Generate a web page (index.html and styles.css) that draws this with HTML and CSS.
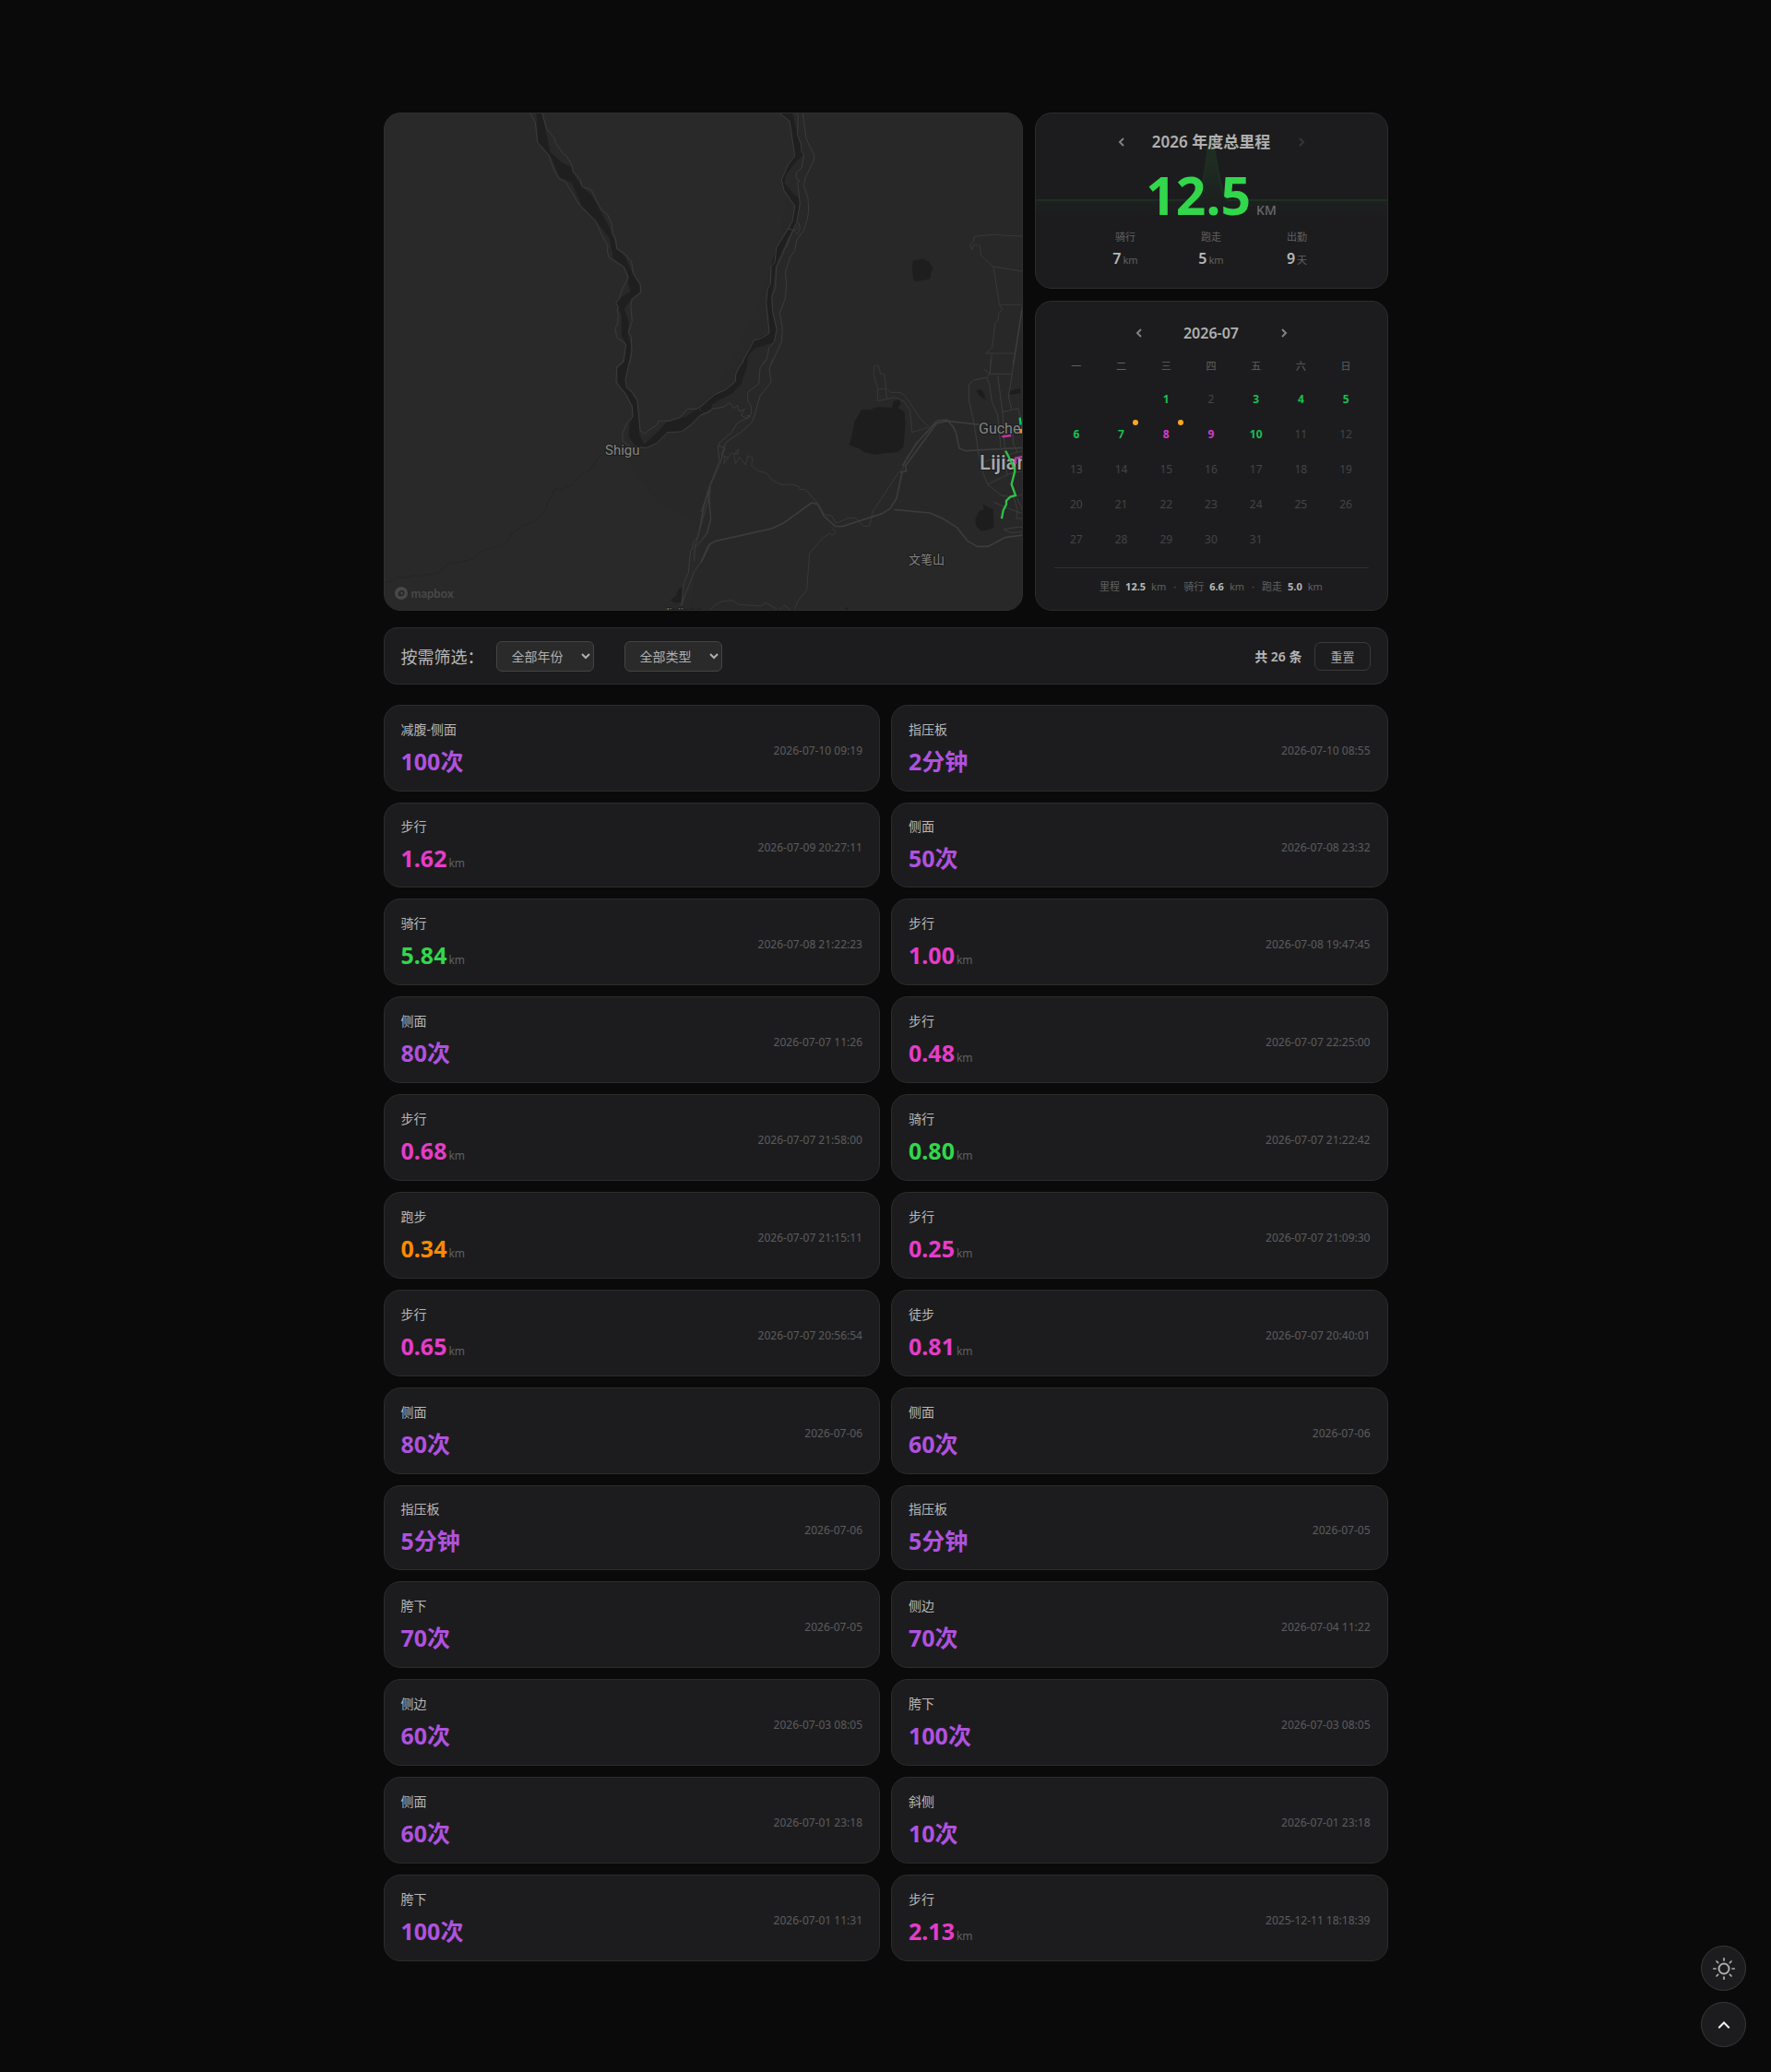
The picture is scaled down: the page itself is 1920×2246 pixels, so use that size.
FILE: index.html
```html
<!DOCTYPE html>
<html lang="zh-CN">
<head>
    <meta charset="UTF-8">
    <meta name="viewport" content="width=device-width, initial-scale=1.0">
    <title>运动记录</title>
    <link rel="stylesheet" href="styles.css">
</head>
<body>
    <main class="page">
        <section class="overview">
            <div class="map">
                <svg class="map-canvas" viewBox="0 0 691 538" preserveAspectRatio="xMinYMin slice" role="img" aria-label="运动轨迹地图">
                    <rect width="691" height="538" fill="#292929"/>
                    <path d="M450 0H691V538H330L345 470L335 440L300 425L268 385L262 365L310 335L360 300L400 220L430 130Z" fill="#282828"/>

                    <!-- west river -->
                    <g transform="translate(-7 -8) scale(.3333)">
                        <path d="M515 24L532 24L545 80L560 150L600 185L630 200L634 218L662 262L695 290L725 345L745 380L765 430L775 465L803 490L830 550L852 585L850 605L822 628L800 660L815 700L812 740L822 780L815 840L798 840L806 775L792 745L792 680L775 640L785 625L820 604L812 570L815 550L800 522L765 495L752 430L708 372L660 320L630 250L590 230L562 165L520 115Z" fill="#1f1f1f"/>
                        <path class="shore" d="M495 24L511 54L518 118L554 158L570 204L588 236L610 248L657 325L708 374L733 432L747 452L745 470L750 492L800 524L813 558L792 600L784 628L773 640L781 652L778 664L781 680L779 708L771 722L776 752L806 774L798 832L785 840"/>
                        <path class="shore" d="M534 24L548 74L573 104L576 118L601 155L613 163L631 193L633 212L658 240L663 262L693 272L726 338L746 352L760 386L763 414L773 432L776 464L800 478L824 506L830 544L852 578L855 606L826 628L822 650L826 700L814 737L823 748L825 800L817 840"/>
                    </g>
                    <g transform="translate(-7 267) scale(.3333)">
                        <path d="M806 0L820 0L805 60L810 90L842 135L848 200L850 245L865 275L910 235L940 200L1000 185L1045 155L1085 130L1085 158L1050 178L985 234L940 236L905 272L870 286L835 278L815 250L818 205L830 185L828 150L804 105L780 75L778 30Z" fill="#1f1f1f"/>
                        <path class="shore" d="M798 0L797 8L776 22L774 72L781 84L805 112L826 153L828 186L809 206L794 240L796 266L824 284L874 286L908 270L941 236L985 234L1014 216L1048 180L1080 168"/>
                        <path class="shore" d="M819 0L804 62L808 90L828 107L843 132L852 230L866 240L908 210L913 199L948 199L980 188L1006 160L1036 160L1082 128M1044 158L1056 170"/>
                        <path class="shore" d="M1082 415L1060 470L1040 575L1025 592L1022 615L1016 622L1009 692L993 732L988 800M1082 425L1055 520L1030 610L1028 655M1075 425L1082 520L1070 565L1032 610M1082 595L1055 652L1029 686L985 800"/>
                        <path d="M978 745L990 740L985 785L970 792L950 782L968 768Z" fill="#1f1f1f"/>
                        <path d="M20 725L45 718L62 706L75 710L120 701L143 705L160 698L196 694L233 658L252 662L300 650L325 635L333 623L375 612L420 592L434 567L468 540L506 528L525 507L540 498L548 484V467L560 450L574 420L596 424L608 413L630 408L648 385L688 358L722 312L745 303" fill="none" stroke="#222" stroke-width="2"/>
                    </g>

                    <!-- east river, lakes and roads of the northern half -->
                    <g transform="translate(343 -8) scale(.3333)">
                        <path d="M256 24L298 24L315 100L332 158L305 185L275 225L272 250L300 285L320 300L318 350L308 385L290 420L262 475L242 520L235 580L228 620L232 670L245 730L238 768L215 775L175 788L155 810L145 840H130L170 763L222 737L220 690L212 640L216 595L230 560L228 520L245 462L290 395L305 325L270 270L262 235L285 190L305 160L288 48Z" fill="#1f1f1f"/>
                        <path class="shore" d="M256 24L288 48L305 162L283 191L262 240L270 275L305 325L297 375L245 461L240 508L228 520L226 577L216 596L212 640L222 738L198 754L173 761L136 830L132 840"/>
                        <path class="shore" d="M310 24L316 30L314 95L325 120L327 148L335 160L327 202L310 215V237L321 243L314 248L322 318L311 380L285 432L270 470L245 525L242 590L230 622L233 668L246 725L238 768L221 786L214 822L200 840M285 399L300 403"/>
                        <path class="shore" d="M331 24L342 106L368 160L367 177L340 232L334 257L348 300L350 340L346 368L333 406L311 436L305 470L290 492L274 541L278 578L274 626L256 673L265 722L262 766L228 840"/>
                        <path class="road" d="M316 378L320 390L303 405L314 418L323 395L318 380M302 400L288 430L280 458L266 468"/>
                        <path d="M690 503L722 496L742 508L755 529L746 543L747 556L740 563L697 570L690 562L687 530Z" fill="#1e1e1e"/>
                        <path class="road" d="M1050 424L950 418L889 424L886 440L876 452L880 468L890 450L907 454L911 487L951 522L1050 538M951 522L971 646L980 660L968 674L966 698L957 704L947 786L926 804H1022M971 646H1042M946 804L943 840"/>
                        <path class="road major" d="M1050 625L1016 840"/>
                    </g>

                    <!-- southern half -->
                    <g transform="translate(343 267) scale(.3333)">
                        <path d="M138 0L152 0L150 20L130 80L100 110L60 130L0 170V150L42 115L80 98L112 72L113 48L125 25Z" fill="#1f1f1f"/>
                        <path d="M522 163L550 162L575 154L622 156L625 136L645 128L650 145L640 156L662 170L665 210L658 285L640 300L600 303L565 308L530 300L515 288L482 278L490 250L500 200Z" fill="#1d1d1d"/>
                        <path d="M895 98L912 97L922 112L926 130L905 118ZM1005 102L1038 92V108L1006 114ZM905 492L920 488L918 470L935 480L950 485L953 545L935 553L912 557L895 540L892 518Z" fill="#1d1d1d"/>
                        <path class="shore" d="M138 0L135 10L124 24L113 48L112 71L80 97L43 114L0 152M0 180L30 168L35 160L72 154L94 140L108 158L118 148L125 168L142 160L130 180L150 192L152 180L163 186"/>
                        <path class="shore" d="M213 0L192 26L188 78L152 105V136L163 150V175L158 186L118 206L100 235L60 270L55 283L60 330L22 425L0 525"/>
                        <path class="shore" d="M234 0L222 28L228 72L192 118L174 180L166 202L132 234L82 268L72 290L65 330L30 410L0 495M22 430L32 515L20 560L0 590M55 280L78 286L70 312L88 318"/>
                        <path class="road" d="M62 300L78 320L74 338L98 304L120 308L121 290L108 310L112 338L125 316L145 342L152 312L168 320L164 345L188 362L213 368L230 390L260 406H300L318 412L322 422H340L382 470L400 502L425 508L440 532L478 515H502L530 541H548L560 492L640 370L655 358L668 320L702 270L765 198" />
                        <path class="road major" d="M0 658L26 602L46 590L230 549L270 530L360 465L380 470L400 508L436 541L460 542L590 500L615 484L636 450L655 362M648 366L668 362L665 345L766 207L800 199L908 211"/>
                        <path class="road major" d="M655 345L702 270L770 198L800 195L822 220L830 240L840 288L860 296L1048 286"/>
                        <path class="road" d="M425 545L438 560L430 570L418 565L395 580L353 630L344 748L315 785L304 812M30 812Q55 782 100 782L122 796L195 801L210 790L246 810M255 812L270 798L290 812"/>
                        <path class="road" d="M565 18L578 20L584 46H596L602 92L618 106H648L668 122L712 190L742 218M562 18V50L574 90V134L632 122L660 135L680 165L686 236L742 218M574 97L600 93L605 128"/>
                        <path class="road major" d="M628 487L744 498L782 514L832 545L868 590L898 607H935L988 578L1048 570"/>
                        <path class="shore" d="M943 0L940 45L928 58L886 66L871 82V130L888 205L902 300L918 370L932 405L975 440L1015 448L1048 436M920 30L940 46H1012L1018 0M1012 46L1000 120L1010 160M928 58L938 78L946 135L965 180L975 285M965 50L982 180L988 290L995 375M980 170L1032 158L1048 230M932 405L1005 370L1048 362M918 332L1048 295M1015 230V270L1028 300M950 462L1015 490L1048 500M1018 448L1030 490L1025 516H1048M1028 450L1048 495M985 552L1035 543L1048 546M985 552L1005 562L1048 560"/>
                        <path d="M465 810L478 804L478 812Z" fill="#1d1d1d"/>
                    </g>

                    <g class="place">
                        <text x="239" y="370" font-size="15">Shigu</text>
                        <text x="644" y="347" font-size="16">Gucheng</text>
                        <text x="645" y="386" font-size="22" class="city">Lijiang</text>
                        <text x="568" y="488" font-size="13">文笔山</text>
                        <text x="302" y="545" font-size="12">Jinjiang</text>
                    </g>

                    <!-- tracks -->
                    <g transform="translate(343 267) scale(.3333)" fill="none" stroke-width="7">
                        <path d="M1037 188L1040 212" stroke="#0ac864"/>
                        <path d="M1036 232H1048" stroke="#f58b1e" stroke-width="14"/>
                        <path d="M979 250L1009 246M1023 338V320L1048 315" stroke="#c233ad"/>
                        <path d="M991 296L1018 350L1021 362L1010 405L1023 441L1006 446L993 458V470L983 490L978 517" stroke="#30c048"/>
                    </g>
                </svg>
                <a class="map-logo" href="#" aria-label="mapbox">
                    <svg width="15" height="15" viewBox="0 0 15 15"><circle cx="7" cy="7" r="7" fill="#484848"/><path d="M4 10C3 7 4.500 4 7.500 3.700C9.500 3.500 11 5 10.600 7C10 10 7 11 4 10Z" fill="#292929"/><path d="M7.500 5L8.100 6.400L9.500 7L8.100 7.600L7.500 9L6.900 7.600L5.500 7L6.900 6.400Z" fill="#505050"/></svg>
                    <span>mapbox</span>
                </a>
            </div>

            <div class="side">
                <section class="card summary">
                    <svg class="trend" viewBox="0 0 381 189" preserveAspectRatio="none" aria-hidden="true">
                        <defs>
                            <linearGradient id="trendFill" x1="0" y1="0" x2="0" y2="1">
                                <stop offset="0" stop-color="#32d74b" stop-opacity=".12"/>
                                <stop offset="1" stop-color="#32d74b" stop-opacity="0"/>
                            </linearGradient>
                        </defs>
                        <path d="M0 94H174C181 94 184 52 188 30Q190 18 192 30C196 54 202 94 208 94H381V112H0Z" fill="url(#trendFill)"/>
                        <path d="M0 94H174C181 94 184 52 188 30Q190 18 192 30C196 54 202 94 208 94H381" fill="none" stroke="#1d2f22" stroke-width="2"/>
                    </svg>
                    <div class="switcher year">
                        <button type="button" aria-label="上一年"><svg width="8" height="12" viewBox="0 0 8 12"><path d="M6 2L2 6L6 10"/></svg></button>
                        <h2>2026 年度总里程</h2>
                        <button type="button" aria-label="下一年" disabled><svg width="8" height="12" viewBox="0 0 8 12"><path d="M2 2L6 6L2 10"/></svg></button>
                    </div>
                    <p class="total"><strong>12.5</strong><span>KM</span></p>
                    <dl class="stats">
                        <div><dt>骑行</dt><dd>7<small>km</small></dd></div>
                        <div><dt>跑走</dt><dd>5<small>km</small></dd></div>
                        <div><dt>出勤</dt><dd>9<small>天</small></dd></div>
                    </dl>
                </section>

                <section class="card calendar">
                    <div class="switcher month">
                        <button type="button" aria-label="上个月"><svg width="8" height="12" viewBox="0 0 8 12"><path d="M6 2L2 6L6 10"/></svg></button>
                        <h2>2026-07</h2>
                        <button type="button" aria-label="下个月"><svg width="8" height="12" viewBox="0 0 8 12"><path d="M2 2L6 6L2 10"/></svg></button>
                    </div>
                    <table class="days">
                        <thead>
                            <tr><th>一</th><th>二</th><th>三</th><th>四</th><th>五</th><th>六</th><th>日</th></tr>
                        </thead>
                        <tbody>
                            <tr><td></td><td></td><td class="ride">1</td><td>2</td><td class="ride">3</td><td class="ride">4</td><td class="ride">5</td></tr>
                            <tr><td class="ride">6</td><td class="ride"><span class="marked">7</span></td><td class="walk"><span class="marked">8</span></td><td class="walk">9</td><td class="ride">10</td><td>11</td><td>12</td></tr>
                            <tr><td>13</td><td>14</td><td>15</td><td>16</td><td>17</td><td>18</td><td>19</td></tr>
                            <tr><td>20</td><td>21</td><td>22</td><td>23</td><td>24</td><td>25</td><td>26</td></tr>
                            <tr><td>27</td><td>28</td><td>29</td><td>30</td><td>31</td><td></td><td></td></tr>
                        </tbody>
                    </table>
                    <p class="month-total">
                        <span>里程</span><b>12.5</b><span>km</span><i>·</i>
                        <span>骑行</span><b>6.6</b><span>km</span><i>·</i>
                        <span>跑走</span><b>5.0</b><span>km</span>
                    </p>
                </section>
            </div>
        </section>

        <form class="filters">
            <span class="filters-title">按需筛选：</span>
            <select class="filter" aria-label="年份">
                <option>全部年份</option>
                <option>2026</option>
                <option>2025</option>
            </select>
            <select class="filter" aria-label="类型">
                <option>全部类型</option>
                <option>骑行</option>
                <option>跑步</option>
                <option>步行</option>
            </select>
            <span class="count">共 26 条</span>
            <button type="reset" class="reset">重置</button>
        </form>

        <section class="records">
            <article class="card record"><div><h3>减腹-侧面</h3><p class="value train">100次</p></div><time>2026-07-10 09:19</time></article>
            <article class="card record"><div><h3>指压板</h3><p class="value train">2分钟</p></div><time>2026-07-10 08:55</time></article>

            <article class="card record tight"><div><h3>步行</h3><p class="value walk">1.62<small>km</small></p></div><time>2026-07-09 20:27:11</time></article>
            <article class="card record tight"><div><h3>侧面</h3><p class="value train">50次</p></div><time>2026-07-08 23:32</time></article>

            <article class="card record"><div><h3>骑行</h3><p class="value ride">5.84<small>km</small></p></div><time>2026-07-08 21:22:23</time></article>
            <article class="card record"><div><h3>步行</h3><p class="value walk">1.00<small>km</small></p></div><time>2026-07-08 19:47:45</time></article>

            <article class="card record"><div><h3>侧面</h3><p class="value train">80次</p></div><time>2026-07-07 11:26</time></article>
            <article class="card record"><div><h3>步行</h3><p class="value walk">0.48<small>km</small></p></div><time>2026-07-07 22:25:00</time></article>

            <article class="card record"><div><h3>步行</h3><p class="value walk">0.68<small>km</small></p></div><time>2026-07-07 21:58:00</time></article>
            <article class="card record"><div><h3>骑行</h3><p class="value ride">0.80<small>km</small></p></div><time>2026-07-07 21:22:42</time></article>

            <article class="card record"><div><h3>跑步</h3><p class="value run">0.34<small>km</small></p></div><time>2026-07-07 21:15:11</time></article>
            <article class="card record"><div><h3>步行</h3><p class="value walk">0.25<small>km</small></p></div><time>2026-07-07 21:09:30</time></article>

            <article class="card record"><div><h3>步行</h3><p class="value walk">0.65<small>km</small></p></div><time>2026-07-07 20:56:54</time></article>
            <article class="card record"><div><h3>徒步</h3><p class="value walk">0.81<small>km</small></p></div><time>2026-07-07 20:40:01</time></article>

            <article class="card record"><div><h3>侧面</h3><p class="value train">80次</p></div><time>2026-07-06</time></article>
            <article class="card record"><div><h3>侧面</h3><p class="value train">60次</p></div><time>2026-07-06</time></article>

            <article class="card record tight"><div><h3>指压板</h3><p class="value train">5分钟</p></div><time>2026-07-06</time></article>
            <article class="card record tight"><div><h3>指压板</h3><p class="value train">5分钟</p></div><time>2026-07-05</time></article>

            <article class="card record"><div><h3>胯下</h3><p class="value train">70次</p></div><time>2026-07-05</time></article>
            <article class="card record"><div><h3>侧边</h3><p class="value train">70次</p></div><time>2026-07-04 11:22</time></article>

            <article class="card record"><div><h3>侧边</h3><p class="value train">60次</p></div><time>2026-07-03 08:05</time></article>
            <article class="card record"><div><h3>胯下</h3><p class="value train">100次</p></div><time>2026-07-03 08:05</time></article>

            <article class="card record"><div><h3>侧面</h3><p class="value train">60次</p></div><time>2026-07-01 23:18</time></article>
            <article class="card record"><div><h3>斜侧</h3><p class="value train">10次</p></div><time>2026-07-01 23:18</time></article>

            <article class="card record"><div><h3>胯下</h3><p class="value train">100次</p></div><time>2026-07-01 11:31</time></article>
            <article class="card record"><div><h3>步行</h3><p class="value walk">2.13<small>km</small></p></div><time>2025-12-11 18:18:39</time></article>
        </section>
    </main>

    <div class="tools">
        <button type="button" class="tool" aria-label="切换主题">
            <svg width="26" height="26" viewBox="0 0 26 26" fill="none" stroke="#adadad" stroke-width="2" stroke-linecap="round"><circle cx="13" cy="13" r="5.500"/><path d="M13 1.800V4M13 22V24.200M1.800 13H4M22 13H24.200M5 5L6.600 6.600M19.400 19.400L21 21M5 21L6.600 19.400M19.400 6.600L21 5" stroke-width="1.700"/></svg>
        </button>
        <button type="button" class="tool" aria-label="回到顶部">
            <svg width="16" height="16" viewBox="0 0 16 16" fill="none" stroke="#f0f0f0" stroke-width="2" stroke-linecap="square"><path d="M3 10.500L8 5.500L13 10.500"/></svg>
        </button>
    </div>
</body>
</html>
```
FILE: styles.css
```css
* {
    box-sizing: border-box;
}
body {
    margin: 0;
    min-height: 100vh;
    background: #0a0a0a;
    color: #b8b8b8;
    color-scheme: dark;
    font-family: "Noto Sans", "Noto Sans CJK SC", sans-serif;
}
h2, h3, p, dl, dd {
    margin: 0;
}
small {
    line-height: 1;
}
button, select {
    font-family: inherit;
}
.page {
    max-width: 1121px;
    margin: 0 auto;
    padding: 122px 16px 120px;
}
.card {
    background: #1c1c1e;
    border: 1px solid #2c2c2e;
    border-radius: 18px;
}
.ride {
    color: #32d74b;
}
.walk {
    color: #e63cc8;
}
.run {
    color: #ff8a00;
}
.train {
    color: #af52de;
}

/* map, year summary, calendar */
.overview {
    display: grid;
    grid-template-columns: minmax(0, 1fr) 383px;
    gap: 13px;
    margin-bottom: 18px;
}
.map {
    position: relative;
    overflow: hidden;
    min-height: 360px;
    border: 1px solid #303030;
    border-radius: 18px;
    background: #292929;
}
.map-canvas {
    position: absolute;
    inset: 0;
    width: 100%;
    height: 100%;
}
.shore, .road {
    fill: none;
    stroke: #3c3c3c;
    stroke-width: 3px;
    stroke-linejoin: round;
}
.road {
    stroke: #383838;
}
.road.major {
    stroke: #3c3c3c;
    stroke-width: 5px;
}
.place text {
    font-family: Roboto, "Noto Sans CJK SC", sans-serif;
    fill: #858585;
    stroke: #1c1c1c;
    stroke-width: 2px;
    paint-order: stroke;
}
.place .city {
    fill: #a8a8a8;
    font-weight: 500;
}
.map-logo {
    position: absolute;
    left: 11px;
    bottom: 9px;
    display: flex;
    align-items: center;
    gap: 3px;
    color: #484848;
    font-family: Lato, sans-serif;
    font-size: 13px;
    font-weight: 700;
    line-height: 18px;
    text-decoration: none;
}
.side {
    display: flex;
    flex-direction: column;
    gap: 13px;
}
.summary {
    position: relative;
    overflow: hidden;
    padding: 19px 20px 20px;
}
.summary > * {
    position: relative;
}
.summary .trend {
    position: absolute;
    inset: 0;
    width: 100%;
    height: 100%;
}
.switcher {
    display: flex;
    align-items: center;
    justify-content: center;
    height: 24px;
}
.switcher h2 {
    color: #b0b0b0;
    font-size: 16px;
    font-weight: 600;
    line-height: 24px;
    text-align: center;
}
.year h2 {
    width: 171px;
    font-size: 17px;
}
.month h2 {
    width: 133px;
}
.switcher button {
    display: flex;
    justify-content: center;
    width: 24px;
    padding: 6px 0;
    border: 0;
    background: none;
    cursor: pointer;
}
.switcher button:disabled {
    opacity: .25;
    cursor: default;
}
.switcher path {
    fill: none;
    stroke: #808080;
    stroke-width: 2px;
}
.total {
    display: flex;
    align-items: baseline;
    justify-content: center;
    gap: 6px;
    height: 70px;
    margin-top: 10px;
    line-height: 70px;
}
.total strong {
    color: #32d74b;
    font-size: 57px;
    font-weight: 700;
}
.total span {
    color: #6a6a6a;
    font-size: 14px;
    font-weight: 500;
}
.stats {
    display: grid;
    grid-template-columns: repeat(3, 93px);
    justify-content: center;
    text-align: center;
}
.stats dt {
    color: #606060;
    font-size: 11px;
    line-height: 22px;
}
.stats dd {
    color: #b8b8b8;
    font-size: 16px;
    font-weight: 600;
    line-height: 24px;
}
.stats small {
    margin-left: 2px;
    color: #606060;
    font-size: 11px;
    font-weight: 400;
}
.calendar {
    flex: 1;
    padding: 22px 20px 15px;
}
.days {
    width: 100%;
    margin-top: 6px;
    table-layout: fixed;
    border-spacing: 0;
    text-align: center;
}
.days th, .days td {
    padding: 0;
    font-size: 12px;
}
.days th {
    height: 34px;
    color: #606060;
    font-size: 11px;
    font-weight: 400;
}
.days td {
    height: 38px;
    color: #444;
}
.days td.ride, .days td.walk {
    font-weight: 700;
}
.days td.ride {
    color: #19bf52;
}
.days td.walk {
    color: #d63cc8;
}
.marked {
    position: relative;
}
.marked::after {
    content: "";
    position: absolute;
    top: -7px;
    right: -15px;
    width: 6px;
    height: 6px;
    border-radius: 50%;
    background: #f9a825;
}
.month-total {
    display: flex;
    align-items: center;
    justify-content: center;
    gap: 6px;
    margin-top: 12px;
    padding-top: 10px;
    border-top: 1px solid #2f2f31;
    color: #606060;
    font-size: 11px;
    line-height: 20px;
}
.month-total b {
    color: #b8b8b8;
}
.month-total i {
    margin: 0 2px;
    font-style: normal;
}

/* filter bar */
.filters {
    display: flex;
    align-items: center;
    min-height: 62px;
    margin-bottom: 22px;
    padding: 0 18px;
    background: #1c1c1e;
    border: 1px solid #2c2c2e;
    border-radius: 14px;
}
.filters-title {
    width: 103px;
    font-size: 18px;
}
.filter {
    width: 106px;
    height: 33px;
    margin-right: 33px;
    padding: 0 0 0 12px;
    border: 1px solid #444;
    border-radius: 6px;
    background-color: #2a2a2a;
    color: #b0b0b0;
    font-size: 14px;
}
.count {
    margin-left: auto;
    font-size: 14px;
    font-weight: 600;
}
.reset {
    height: 31px;
    margin-left: 14px;
    padding: 0 16px;
    border: 1px solid #3a3a3c;
    border-radius: 7px;
    background: none;
    color: #a8a8a8;
    font-size: 13px;
    cursor: pointer;
}

/* record list */
.records {
    display: grid;
    grid-template-columns: repeat(2, minmax(0, 1fr));
    gap: 12px;
}
.record {
    display: flex;
    align-items: center;
    justify-content: space-between;
    padding: 16px 18px;
}
.record.tight {
    padding: 15px 18px;
}
.record h3 {
    margin-bottom: 8px;
    font-size: 14px;
    font-weight: 400;
    line-height: 20px;
}
.value {
    height: 32px;
    font-size: 25px;
    font-weight: 700;
    line-height: 32px;
}
.value small {
    margin-left: 2px;
    color: #606060;
    font-size: 12px;
    font-weight: 400;
}
.record time {
    padding-top: 4px;
    color: #5c5c5e;
    font-size: 12px;
}

/* floating buttons */
.tools {
    position: fixed;
    right: 27px;
    bottom: 27px;
    display: flex;
    flex-direction: column;
    gap: 12px;
}
.tool {
    display: flex;
    align-items: center;
    justify-content: center;
    width: 49px;
    height: 49px;
    padding: 0;
    border: 1px solid #3a3a3c;
    border-radius: 50%;
    background: #1c1c1e;
    cursor: pointer;
}

@media (max-width: 900px) {
    .overview, .records {
        grid-template-columns: minmax(0, 1fr);
    }
}
```
